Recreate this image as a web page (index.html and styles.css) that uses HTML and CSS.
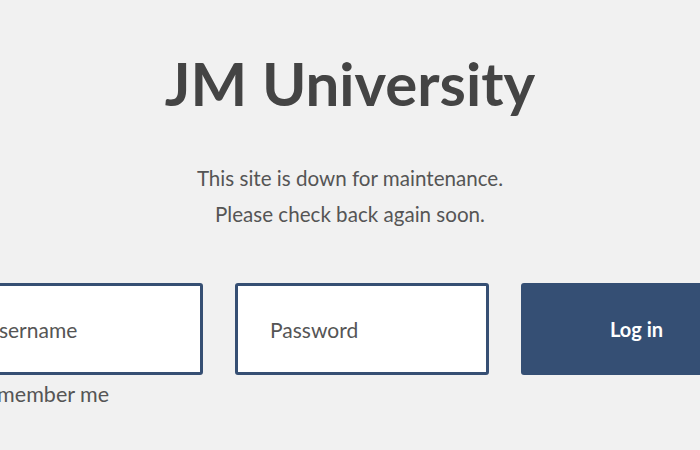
FILE: index.html
```html
<!DOCTYPE html>
<html>
<head>
<meta charset="utf-8">
<link rel="stylesheet" href="styles.css">
</head>
<body>
<main class="page">
  <h1 class="title">JM University</h1>
  <p class="msg">This site is down for maintenance.</p>
  <p class="msg">Please check back again soon.</p>
  <form class="login">
    <div class="row">
      <input class="field" type="text" placeholder="Username">
      <input class="field" type="password" placeholder="Password">
      <button class="btn" type="button">Log in</button>
    </div>
    <label class="remember"><input class="check" type="checkbox">Remember me</label>
  </form>
</main>
</body>
</html>
```
FILE: styles.css
```css
html, body {
  margin: 0;
  padding: 0;
  background: #f1f1f1;
  overflow: hidden;
}
.page {
  width: 700px;
  height: 450px;
  font-family: Lato, "Noto Sans", sans-serif;
  color: #555;
}
.title {
  margin: 0;
  padding-top: 50px;
  text-align: center;
  font-size: 60px;
  font-weight: 700;
  line-height: 66px;
  color: #444;
}
.msg {
  margin: 0;
  text-align: center;
  font-size: 20.6px;
  line-height: 36px;
}
.title + .msg {
  margin-top: 44px;
}
.login {
  margin-top: 51px;
  margin-left: -51px;
}
.row {
  display: flex;
  gap: 32px;
}
.field {
  box-sizing: border-box;
  width: 254px;
  height: 92px;
  border: 3px solid #364f73;
  border-radius: 3px;
  background: #fff;
  padding: 0 32px;
  font-family: Lato, "Noto Sans", sans-serif;
  font-size: 21px;
  color: #555;
  outline: none;
}
.field::placeholder {
  color: #555;
}
.btn {
  flex: none;
  width: 231px;
  height: 92px;
  border: none;
  border-radius: 3px;
  background: #354f74;
  color: #fff;
  font-family: Lato, "Noto Sans", sans-serif;
  font-size: 20px;
  font-weight: 700;
}
.remember {
  display: flex;
  align-items: center;
  margin-top: 7px;
  font-size: 21.5px;
  line-height: 24px;
}
.check {
  margin: 0 6px 0 0;
  width: 18px;
  height: 18px;
}
```
